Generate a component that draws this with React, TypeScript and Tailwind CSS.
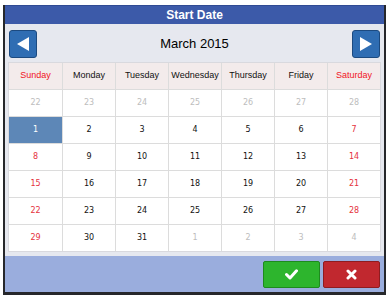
import React from 'react';

type Cell = { d: number; muted?: boolean };

const DAYS = ['Sunday', 'Monday', 'Tuesday', 'Wednesday', 'Thursday', 'Friday', 'Saturday'];

// March 2015, padded with Feb / April days
function buildWeeks(): Cell[][] {
  const cells: Cell[] = [];
  for (let d = 22; d <= 28; d++) cells.push({ d, muted: true });
  for (let d = 1; d <= 31; d++) cells.push({ d });
  for (let d = 1; d <= 4; d++) cells.push({ d, muted: true });
  const weeks: Cell[][] = [];
  for (let i = 0; i < cells.length; i += 7) weeks.push(cells.slice(i, i + 7));
  return weeks;
}

function Arrow({ dir }: { dir: 'left' | 'right' }) {
  return (
    <button className="w-[28px] h-[28px] rounded-[3px] border border-[#1c4a80] bg-[#2f6db3] flex items-center justify-center">
      <svg width="12" height="14" viewBox="0 0 12 14">
        {dir === 'left' ? (
          <polygon points="0,7 12,0 12,14" fill="#fff" />
        ) : (
          <polygon points="12,7 0,0 0,14" fill="#fff" />
        )}
      </svg>
    </button>
  );
}

export default function App() {
  const weeks = buildWeeks();
  return (
    <div className="w-[388px] h-[296px] bg-white pt-[5px] pl-[3px]" style={{ fontFamily: '"Liberation Sans", Arial, sans-serif' }}>
      <div className="w-[383px] h-[290px] border-x-2 border-b-[3px] border-[#26272b] bg-[#e6e8ef] flex flex-col">
        <div className="h-[19px] bg-[#3c5aa9] border-t border-[#2f4a93] flex items-center justify-center text-white font-bold text-[12px]">
          Start Date
        </div>

        <div className="h-[38px] flex items-center justify-between pl-[4px] pr-[4px] pt-[2px]">
          <Arrow dir="left" />
          <span className="text-[13px] text-black">March 2015</span>
          <Arrow dir="right" />
        </div>

        <div className="mx-[3px] border border-[#d9d9de] bg-white">
          <div className="grid grid-cols-7 h-[26px] bg-[#f3ebeb]">
            {DAYS.map((name, i) => (
              <div
                key={name}
                className={`flex items-center justify-center text-[9px] ${i > 0 ? 'border-l border-[#dcdcdc]' : ''} ${
                  i === 0 || i === 6 ? 'text-[#f0141e]' : 'text-[#111]'
                }`}
              >
                {name}
              </div>
            ))}
          </div>
          {weeks.map((week, w) => (
            <div key={w} className="grid grid-cols-7 h-[27px] border-t border-[#dcdcdc]">
              {week.map((c, i) => {
                const selected = w === 1 && i === 0;
                const weekend = i === 0 || i === 6;
                const color = selected
                  ? 'text-white bg-[#5d87b7]'
                  : c.muted
                    ? 'text-[#bdbdbd]'
                    : weekend
                      ? 'text-[#e5323c]'
                      : 'text-[#111]';
                return (
                  <div
                    key={i}
                    className={`flex items-center justify-center text-[8px] ${i > 0 ? 'border-l border-[#dcdcdc]' : ''} ${color}`}
                    style={{ fontFamily: '"DejaVu Sans", Verdana, sans-serif' }}
                  >
                    {c.d}
                  </div>
                );
              })}
            </div>
          ))}
        </div>

        <div className="mt-auto h-[36px] bg-[#9aaddd] flex items-center justify-end gap-[3px] pr-[4px]">
          <button className="w-[57px] h-[27px] rounded-[2px] bg-[#2db52d] border border-[#1e8a1e] flex items-center justify-center">
            <svg width="13" height="11" viewBox="0 0 13 11">
              <path d="M1.5 5.5 L5 9 L11.5 1.8" stroke="#fff" strokeWidth="3" fill="none" strokeLinecap="round" strokeLinejoin="round" />
            </svg>
          </button>
          <button className="w-[57px] h-[27px] rounded-[2px] bg-[#c1282f] border border-[#8e1c20] flex items-center justify-center">
            <svg width="11" height="11" viewBox="0 0 11 11">
              <path d="M2 2 L9 9 M9 2 L2 9" stroke="#fff" strokeWidth="3" fill="none" strokeLinecap="round" />
            </svg>
          </button>
        </div>
      </div>
    </div>
  );
}
